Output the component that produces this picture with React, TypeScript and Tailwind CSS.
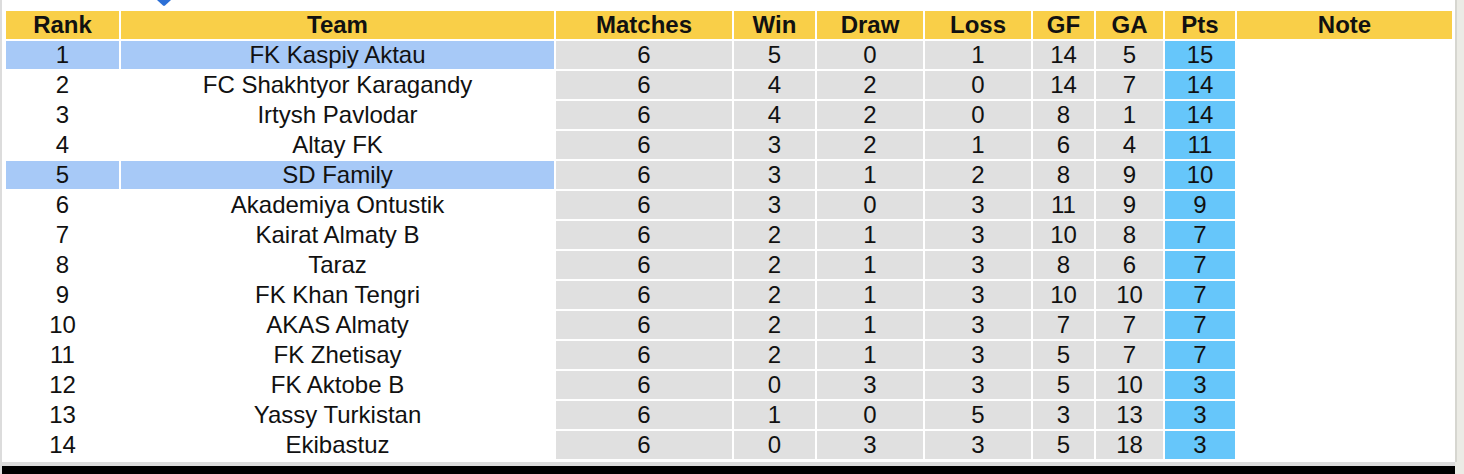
const COLS = ['Rank', 'Team', 'Matches', 'Win', 'Draw', 'Loss', 'GF', 'GA', 'Pts', 'Note'];

const ROWS = [
  { rank: 1, team: 'FK Kaspiy Aktau', m: 6, w: 5, d: 0, l: 1, gf: 14, ga: 5, pts: 15, hl: true },
  { rank: 2, team: 'FC Shakhtyor Karagandy', m: 6, w: 4, d: 2, l: 0, gf: 14, ga: 7, pts: 14 },
  { rank: 3, team: 'Irtysh Pavlodar', m: 6, w: 4, d: 2, l: 0, gf: 8, ga: 1, pts: 14 },
  { rank: 4, team: 'Altay FK', m: 6, w: 3, d: 2, l: 1, gf: 6, ga: 4, pts: 11 },
  { rank: 5, team: 'SD Family', m: 6, w: 3, d: 1, l: 2, gf: 8, ga: 9, pts: 10, hl: true },
  { rank: 6, team: 'Akademiya Ontustik', m: 6, w: 3, d: 0, l: 3, gf: 11, ga: 9, pts: 9 },
  { rank: 7, team: 'Kairat Almaty B', m: 6, w: 2, d: 1, l: 3, gf: 10, ga: 8, pts: 7 },
  { rank: 8, team: 'Taraz', m: 6, w: 2, d: 1, l: 3, gf: 8, ga: 6, pts: 7 },
  { rank: 9, team: 'FK Khan Tengri', m: 6, w: 2, d: 1, l: 3, gf: 10, ga: 10, pts: 7 },
  { rank: 10, team: 'AKAS Almaty', m: 6, w: 2, d: 1, l: 3, gf: 7, ga: 7, pts: 7 },
  { rank: 11, team: 'FK Zhetisay', m: 6, w: 2, d: 1, l: 3, gf: 5, ga: 7, pts: 7 },
  { rank: 12, team: 'FK Aktobe B', m: 6, w: 0, d: 3, l: 3, gf: 5, ga: 10, pts: 3 },
  { rank: 13, team: 'Yassy Turkistan', m: 6, w: 1, d: 0, l: 5, gf: 3, ga: 13, pts: 3 },
  { rank: 14, team: 'Ekibastuz', m: 6, w: 0, d: 3, l: 3, gf: 5, ga: 18, pts: 3 },
];

const cell = 'h-[28px] leading-[28px] text-center';

export default function App() {
  return (
    <div
      className="flex h-[474px] w-[1464px] bg-[#ebebe5] text-[24px] text-[#111]"
      style={{ fontFamily: '"Liberation Sans", Arial, sans-serif' }}
    >
      <div className="w-[2px] bg-[#dcdcdc]" />
      <div className="flex w-[1455px] flex-col">
        <div className="relative h-[462px] w-[1455px] border-r-2 border-[#d6d6d0] bg-white pl-[4px] pt-[11px]">
          {/* tip of the marker above the table */}
          <svg className="absolute left-[154px] top-0" width="16" height="6" viewBox="0 0 16 6">
            <path d="M1 0 L15 0 L9 5.5 Q8 6.3 7 5.5 Z" fill="#2c6fd6" />
          </svg>

          <div className="grid grid-cols-[113px_433px_176px_81px_106px_106px_61px_67px_70px_215px] gap-[2px]">
            {COLS.map(c => (
              <div key={c} className={`${cell} bg-[#f9cf48] font-bold`}>{c}</div>
            ))}
            {ROWS.map(r => (
              <div key={r.rank} className="contents">
                <div className={`${cell} ${r.hl ? 'bg-[#a7c9f7]' : 'bg-white'}`}>{r.rank}</div>
                <div className={`${cell} ${r.hl ? 'bg-[#a7c9f7]' : 'bg-white'}`}>{r.team}</div>
                <div className={`${cell} bg-[#e0e0e0]`}>{r.m}</div>
                <div className={`${cell} bg-[#e0e0e0]`}>{r.w}</div>
                <div className={`${cell} bg-[#e0e0e0]`}>{r.d}</div>
                <div className={`${cell} bg-[#e0e0e0]`}>{r.l}</div>
                <div className={`${cell} bg-[#e0e0e0]`}>{r.gf}</div>
                <div className={`${cell} bg-[#e0e0e0]`}>{r.ga}</div>
                <div className={`${cell} bg-[#66c6fa]`}>{r.pts}</div>
                <div className={`${cell} bg-white`} />
              </div>
            ))}
          </div>
        </div>
        <div className="h-[4px] w-[1453px] bg-[#dcdcdc]" />
        <div className="h-[8px] w-[1453px] bg-black" />
      </div>
    </div>
  );
}
